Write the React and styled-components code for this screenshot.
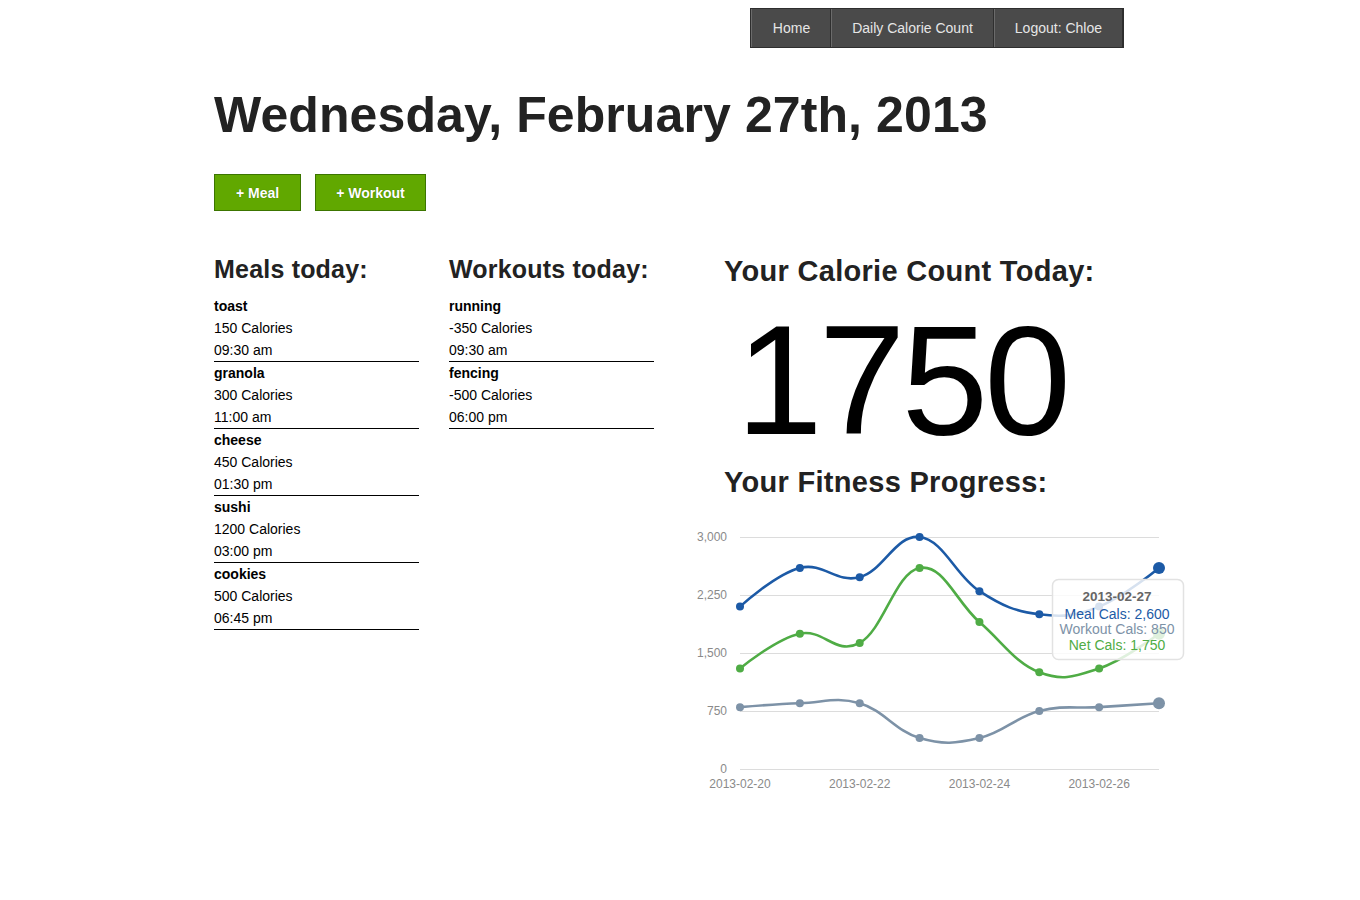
import React from "react";
import styled, { createGlobalStyle } from "styled-components";

const GlobalStyle = createGlobalStyle`
  html, body { margin: 0; padding: 0; background: #fff; }
  body { font-family: "Liberation Sans", Arial, sans-serif; color: #000; }
`;

const Page = styled.div`
  width: 932px;
  margin: 0 auto;
  padding: 0 14px;
`;

const Header = styled.header`
  display: flex;
  justify-content: flex-end;
  padding-top: 8px;
  padding-right: 22px;
`;

const NavBar = styled.nav`
  display: flex;
  background: #4a4a4a;
  border: 1px solid #2e2e2e;
  height: 38px;
`;

const NavItem = styled.a`
  display: flex;
  align-items: center;
  padding: 0 20px;
  font-size: 14px;
  color: #e6e6e6;
  text-decoration: none;
  border-left: 1px solid #6b6b6b;
  border-right: 1px solid #2f2f2f;
  &:first-child { padding-left: 21px; }
`;

const Title = styled.h1`
  margin: 37px 0 0;
  font-family: "Liberation Sans", Arial, sans-serif;
  font-weight: 700;
  font-size: 50px;
  line-height: 60px;
  color: #222;
  letter-spacing: 0.1px;
`;

const ButtonRow = styled.div`
  display: flex;
  gap: 14px;
  margin-top: 29px;
`;

const AddButton = styled.button`
  height: 37px;
  padding: 0 ${(p) => p.$pad || 21}px;
  background: #61a800;
  border: 1px solid #3c7500;
  color: #fff;
  font-family: "Liberation Sans", Arial, sans-serif;
  font-weight: 700;
  font-size: 14px;
  text-shadow: 0 0 1px rgba(0, 0, 0, 0.35);
  cursor: pointer;
`;

const Columns = styled.div`
  display: flex;
  margin-top: 43px;
`;

const ListColumn = styled.section`
  flex: 0 0 205px;
  margin-right: 30px;
`;

const SectionHeading = styled.h2`
  margin: 0;
  font-weight: 700;
  font-size: 25px;
  line-height: 30px;
  color: #222;
  letter-spacing: 0.2px;
  white-space: nowrap;
`;

const EntryList = styled.ul`
  list-style: none;
  margin: 11px 0 0;
  padding: 0;
`;

const Entry = styled.li`
  border-bottom: 1px solid #000;
`;

const EntryLine = styled.div`
  font-size: 14px;
  line-height: 22px;
  font-weight: ${(p) => (p.$bold ? 700 : 400)};
  color: #000;
`;

const StatColumn = styled.section`
  flex: 1;
  display: flex;
  flex-direction: column;
`;

const BigHeading = styled.h2`
  margin: ${(p) => p.$top || 0}px 0 0 40px;
  font-weight: 700;
  font-size: 29px;
  line-height: 34px;
  color: #222;
  letter-spacing: 0.3px;
  white-space: nowrap;
`;

const BigNumber = styled.div`
  margin: 14px 0 0 52px;
  font-size: 156px;
  line-height: 156px;
  font-weight: 400;
  letter-spacing: -4px;
  color: #000;
`;

const ChartWrap = styled.div`
  margin-top: 16px;
  width: 510px;
  height: 290px;
`;

const meals = [
  { name: "toast", cal: "150 Calories", time: "09:30 am" },
  { name: "granola", cal: "300 Calories", time: "11:00 am" },
  { name: "cheese", cal: "450 Calories", time: "01:30 pm" },
  { name: "sushi", cal: "1200 Calories", time: "03:00 pm" },
  { name: "cookies", cal: "500 Calories", time: "06:45 pm" },
];

const workouts = [
  { name: "running", cal: "-350 Calories", time: "09:30 am" },
  { name: "fencing", cal: "-500 Calories", time: "06:00 pm" },
];

const mealData = [2100, 2600, 2480, 3000, 2300, 2000, 2100, 2600];
const workoutData = [800, 850, 850, 400, 400, 750, 800, 850];
const netData = mealData.map((m, i) => m - workoutData[i]);

const X0 = 56;
const X1 = 475;
const Y0 = 254;
const YTOP = 22;
const px = (i) => X0 + (i * (X1 - X0)) / 7;
const py = (v) => Y0 - (v * (Y0 - YTOP)) / 3000;

function splinePath(values) {
  const pts = values.map((v, i) => ({ x: px(i), y: py(v) }));
  const n = pts.length;
  const ctrl = pts.map((p, i) => {
    if (i === 0 || i === n - 1) return { lx: p.x, ly: p.y, rx: p.x, ry: p.y };
    const prev = pts[i - 1];
    const next = pts[i + 1];
    const s = 1.5;
    const den = s + 1;
    const lx = (s * p.x + prev.x) / den;
    let ly = (s * p.y + prev.y) / den;
    const rx = (s * p.x + next.x) / den;
    let ry = (s * p.y + next.y) / den;
    const corr = ((ry - ly) * (rx - p.x)) / (rx - lx) + p.y - ry;
    ly += corr;
    ry += corr;
    return { lx, ly, rx, ry };
  });
  let d = `M ${pts[0].x} ${pts[0].y}`;
  for (let i = 1; i < n; i++) {
    d += ` C ${ctrl[i - 1].rx} ${ctrl[i - 1].ry} ${ctrl[i].lx} ${ctrl[i].ly} ${pts[i].x} ${pts[i].y}`;
  }
  return { d, pts };
}

const series = [
  { data: workoutData, color: "#7d92a7" },
  { data: netData, color: "#4fac45" },
  { data: mealData, color: "#1c5aa6" },
];

const FONT = "Liberation Sans, Arial, sans-serif";

function Chart() {
  const ticks = [0, 750, 1500, 2250, 3000];
  const xLabels = [0, 2, 4, 6];
  return (
    <svg width="510" height="290" viewBox="0 0 510 290">
      {ticks.map((t) => (
        <g key={t}>
          <line x1={X0} x2={X1} y1={py(t) + 0.5} y2={py(t) + 0.5} stroke="#dcdcdc" strokeWidth="1" />
          <text x={43} y={py(t) + 4} textAnchor="end" fontFamily={FONT} fontSize="12" fill="#8a8a8a">
            {t.toLocaleString("en-US")}
          </text>
        </g>
      ))}
      {xLabels.map((i) => (
        <text key={i} x={px(i)} y={273} textAnchor="middle" fontFamily={FONT} fontSize="12" fill="#8a8a8a">
          {`2013-02-${20 + i}`}
        </text>
      ))}
      {series.map((s, si) => {
        const { d, pts } = splinePath(s.data);
        return (
          <g key={si}>
            <path d={d} fill="none" stroke={s.color} strokeWidth="2.6" strokeLinejoin="round" />
            {pts.map((p, i) => (
              <circle key={i} cx={p.x} cy={p.y} r={i === pts.length - 1 ? 6 : 4} fill={s.color} />
            ))}
          </g>
        );
      })}
      <g>
        <rect
          x={368.5}
          y={64.5}
          width={131}
          height={80}
          rx={6}
          ry={6}
          fill="rgba(255,255,255,0.82)"
          stroke="#e2e2e2"
          strokeWidth="1.5"
        />
        <text x={433} y={86} textAnchor="middle" fontFamily={FONT} fontSize="13.5" fontWeight="700" fill="#666">
          2013-02-27
        </text>
        <text x={433} y={104} textAnchor="middle" fontFamily={FONT} fontSize="14" fill="#1c5aa6">
          Meal Cals: 2,600
        </text>
        <text x={433} y={119} textAnchor="middle" fontFamily={FONT} fontSize="14" fill="#7d92a7">
          Workout Cals: 850
        </text>
        <text x={433} y={135} textAnchor="middle" fontFamily={FONT} fontSize="14" fill="#4fac45">
          Net Cals: 1,750
        </text>
      </g>
    </svg>
  );
}

function EntryGroup({ items }) {
  return (
    <EntryList>
      {items.map((it) => (
        <Entry key={it.name}>
          <EntryLine $bold>{it.name}</EntryLine>
          <EntryLine>{it.cal}</EntryLine>
          <EntryLine>{it.time}</EntryLine>
        </Entry>
      ))}
    </EntryList>
  );
}

export default function App() {
  return (
    <>
      <GlobalStyle />
      <Page>
        <Header>
          <NavBar>
            <NavItem href="#">Home</NavItem>
            <NavItem href="#">Daily Calorie Count</NavItem>
            <NavItem href="#">Logout: Chloe</NavItem>
          </NavBar>
        </Header>
        <Title>Wednesday, February 27th, 2013</Title>
        <ButtonRow>
          <AddButton $pad={21}>+ Meal</AddButton>
          <AddButton $pad={20}>+ Workout</AddButton>
        </ButtonRow>
        <Columns>
          <ListColumn>
            <SectionHeading>Meals today:</SectionHeading>
            <EntryGroup items={meals} />
          </ListColumn>
          <ListColumn>
            <SectionHeading>Workouts today:</SectionHeading>
            <EntryGroup items={workouts} />
          </ListColumn>
          <StatColumn>
            <BigHeading $top={0}>Your Calorie Count Today:</BigHeading>
            <BigNumber>1750</BigNumber>
            <BigHeading $top={7}>Your Fitness Progress:</BigHeading>
            <ChartWrap>
              <Chart />
            </ChartWrap>
          </StatColumn>
        </Columns>
      </Page>
    </>
  );
}
